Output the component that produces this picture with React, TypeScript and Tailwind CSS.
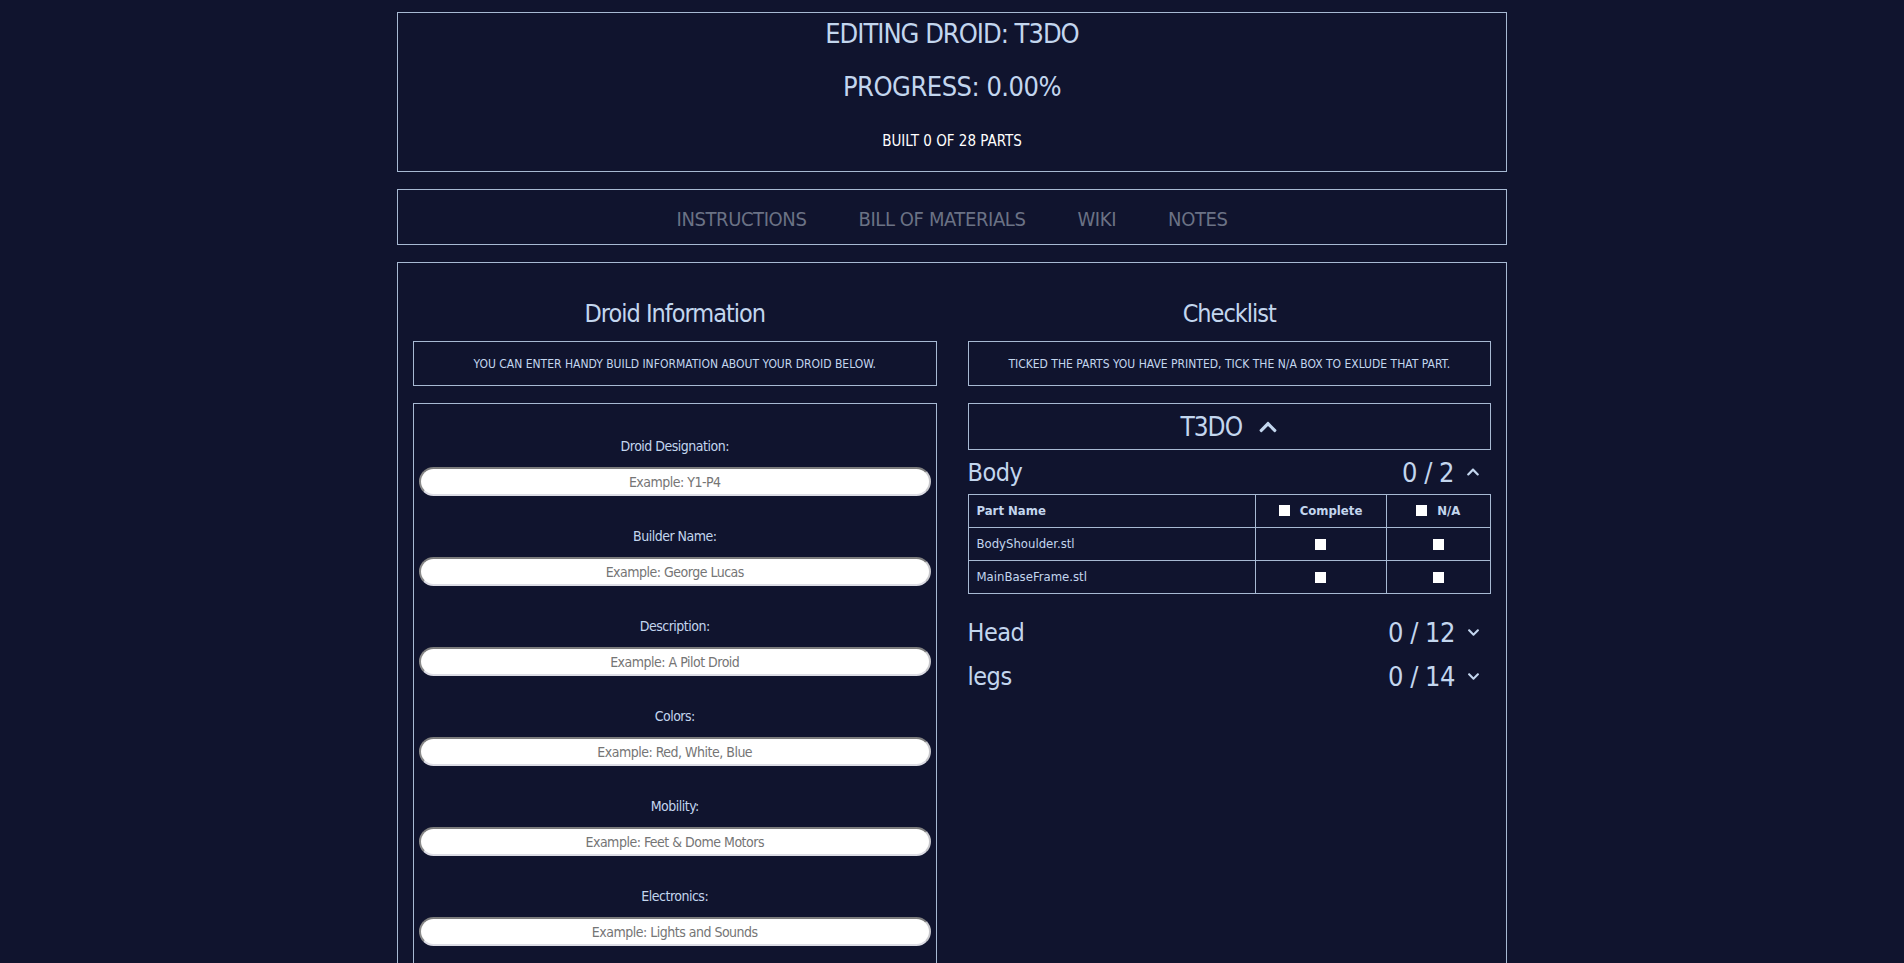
import React from "react";
import { FaChevronUp, FaChevronDown } from "react-icons/fa";

const fields = [
  ["Droid Designation:", "Example: Y1-P4"],
  ["Builder Name:", "Example: George Lucas"],
  ["Description:", "Example: A Pilot Droid"],
  ["Colors:", "Example: Red, White, Blue"],
  ["Mobility:", "Example: Feet & Dome Motors"],
  ["Electronics:", "Example: Lights and Sounds"],
];

function Box() {
  return <span className="inline-block w-[11px] h-[11px] bg-white" />;
}

function Section({ name, count, open }: { name: string; count: string; open: boolean }) {
  return (
    <div className="h-[44px] flex items-center justify-between">
      <span className="text-[25px] leading-none tracking-[-0.5px]">{name}</span>
      <span className="flex items-center gap-[12px] pr-[11px]">
        <span className="text-[27px] leading-none tracking-[-0.5px]">{count}</span>
        {open ? <FaChevronUp className="w-[14px] h-[14px]" /> : <FaChevronDown className="w-[13px] h-[13px]" />}
      </span>
    </div>
  );
}

export default function App() {
  return (
    <div className="min-h-[963px] bg-[#10142e] text-[#c3d6ee] font-['DejaVu_Sans_Condensed','DejaVu_Sans',sans-serif]">
      <div className="w-[1110px] mx-auto pt-[12px]">
        {/* header */}
        <div className="h-[160px] border border-[#a7b9d3] flex flex-col items-center">
          <h1 className="mt-[1px] text-[27px] leading-[40px] tracking-[-1px]">EDITING DROID: T3DO</h1>
          <h2 className="mt-[13px] text-[27px] leading-[40px] tracking-[-0.5px]">PROGRESS: 0.00%</h2>
          <div className="mt-[22px] text-[15px] leading-[24px] text-white">BUILT 0 OF 28 PARTS</div>
        </div>

        {/* nav */}
        <div className="mt-[17px] h-[56px] pt-[4px] border border-[#a7b9d3] flex items-center justify-center gap-[52px] text-[20px] tracking-[-0.4px] text-[#6b7285]">
          <span>INSTRUCTIONS</span>
          <span>BILL OF MATERIALS</span>
          <span>WIKI</span>
          <span>NOTES</span>
        </div>

        {/* main */}
        <div className="mt-[17px] border border-[#a7b9d3] px-[15px] pt-[31px] pb-[40px] grid grid-cols-2 gap-x-[31px] items-start">
          {/* left */}
          <div className="flex flex-col">
            <h3 className="text-[25px] leading-[40px] tracking-[-1px] text-center">Droid Information</h3>
            <div className="mt-[7px] h-[45px] border border-[#a7b9d3] flex items-center justify-center text-[12px]">
              YOU CAN ENTER HANDY BUILD INFORMATION ABOUT YOUR DROID BELOW.
            </div>
            <div className="mt-[17px] border border-[#a7b9d3] px-[5px] pt-[30px] pb-[40px] flex flex-col gap-[28px]">
              {fields.map(([label, ph]) => (
                <div key={label} className="flex flex-col items-center">
                  <label className="text-[14px] leading-[24px] tracking-[-0.5px]">{label}</label>
                  <input
                    placeholder={ph}
                    className="mt-[9px] w-full h-[29px] rounded-full bg-white border-2 border-t-[#7d7d7d] border-l-[#8a8a8a] border-r-[#c8c8cc] border-b-[#dcdce4] text-center text-[14px] tracking-[-0.5px] text-[#333] placeholder:text-[#757575] outline-none"
                  />
                </div>
              ))}
            </div>
          </div>

          {/* right */}
          <div className="flex flex-col">
            <h3 className="text-[25px] leading-[40px] tracking-[-1px] text-center">Checklist</h3>
            <div className="mt-[7px] h-[45px] border border-[#a7b9d3] flex items-center justify-center text-[12px]">
              TICKED THE PARTS YOU HAVE PRINTED, TICK THE N/A BOX TO EXLUDE THAT PART.
            </div>
            <div className="mt-[17px] h-[47px] border border-[#a7b9d3] flex items-center justify-center gap-[16px]">
              <span className="text-[26px] leading-none tracking-[-1px]">T3DO</span>
              <FaChevronUp className="w-[20px] h-[20px]" />
            </div>
            <Section name="Body" count="0 / 2" open />
            <table className="w-full border-collapse text-[13px]">
              <colgroup>
                <col className="w-[287px]" />
                <col className="w-[131px]" />
                <col />
              </colgroup>
              <thead>
                <tr className="h-[33px]">
                  <th className="border border-[#a7b9d3] text-left pl-[8px] font-bold">Part Name</th>
                  <th className="border border-[#a7b9d3] font-bold">
                    <span className="inline-flex items-center gap-[10px]"><Box />Complete</span>
                  </th>
                  <th className="border border-[#a7b9d3] font-bold">
                    <span className="inline-flex items-center gap-[10px]"><Box />N/A</span>
                  </th>
                </tr>
              </thead>
              <tbody>
                {["BodyShoulder.stl", "MainBaseFrame.stl"].map((p) => (
                  <tr key={p} className="h-[33px]">
                    <td className="border border-[#a7b9d3] pl-[8px]">{p}</td>
                    <td className="border border-[#a7b9d3] text-center"><span className="inline-flex align-middle"><Box /></span></td>
                    <td className="border border-[#a7b9d3] text-center"><span className="inline-flex align-middle"><Box /></span></td>
                  </tr>
                ))}
              </tbody>
            </table>
            <div className="mt-[16px]">
              <Section name="Head" count="0 / 12" open={false} />
              <Section name="legs" count="0 / 14" open={false} />
            </div>
          </div>
        </div>
      </div>
    </div>
  );
}
